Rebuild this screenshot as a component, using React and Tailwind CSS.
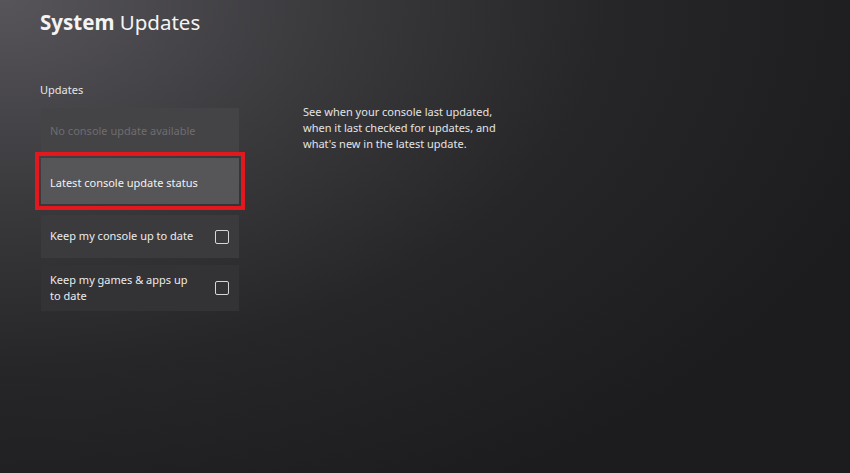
import { useState } from "react";

// Xbox-style "System Updates" settings page.
function Checkbox({ checked }) {
  return (
    <span
      className={`h-[14px] w-[14px] shrink-0 rounded-[2px] border-[1.5px] border-[#d6d6d6] ${
        checked ? "bg-[#d6d6d6]" : ""
      }`}
    />
  );
}

export default function App() {
  const [console1, setConsole1] = useState(false);
  const [games, setGames] = useState(false);

  return (
    <div
      className="h-[473px] w-[850px] overflow-hidden bg-[radial-gradient(ellipse_110%_120%_at_0%_0%,#57555a_0%,#3a393c_35%,#262528_65%,#1c1c1f_100%)] text-white"
      style={{ fontFamily: '"Noto Sans", "Open Sans", sans-serif' }}
    >
      <h1 className="pl-[40px] pt-[8px] text-[20.5px] leading-[28px] text-[#f4f4f4]">
        <span className="font-bold">System</span> Updates
      </h1>

      <div className="mt-[46px] flex pl-[41px]">
        <div className="w-[198px]">
          <div className="-ml-px mb-[10px] text-[11px] leading-[16px] text-[#e6e6e6]">Updates</div>

          <div className="flex flex-col">
            <div className="mb-[-1px] flex h-[45px] items-center bg-[#444346] pl-[9px] pt-[1px] text-[11px] text-[#6e6d70]">
              No console update available
            </div>

            {/* focused item with the red highlight frame */}
            <div className="-mx-[6px] border-[4px] border-[#e3181e] p-[2px]">
              <div className="flex h-[46px] items-center bg-[#565557] pl-[9px] pt-[4px] text-[11px] text-[#f2f2f2]">
                Latest console update status
              </div>
            </div>

            <div
              className="mt-[5px] flex h-[43px] items-center justify-between bg-[#3b3a3d] pl-[9px] pr-[10px] text-[11px] text-[#ececec]"
              onClick={() => setConsole1(!console1)}
            >
              <span>Keep my console up to date</span>
              <Checkbox checked={console1} />
            </div>

            <div
              className="mt-[7px] flex h-[46px] items-center justify-between bg-[#333235] pl-[9px] pr-[10px] text-[11px] leading-[16px] text-[#ececec]"
              onClick={() => setGames(!games)}
            >
              <span className="w-[145px]">Keep my games &amp; apps up to date</span>
              <Checkbox checked={games} />
            </div>
          </div>
        </div>

        <p className="ml-[64px] mt-[22px] w-[200px] text-[11px] leading-[16px] text-[#e4e4e4]">
          See when your console last updated, when it last checked for updates, and what's new in the latest update.
        </p>
      </div>
    </div>
  );
}
